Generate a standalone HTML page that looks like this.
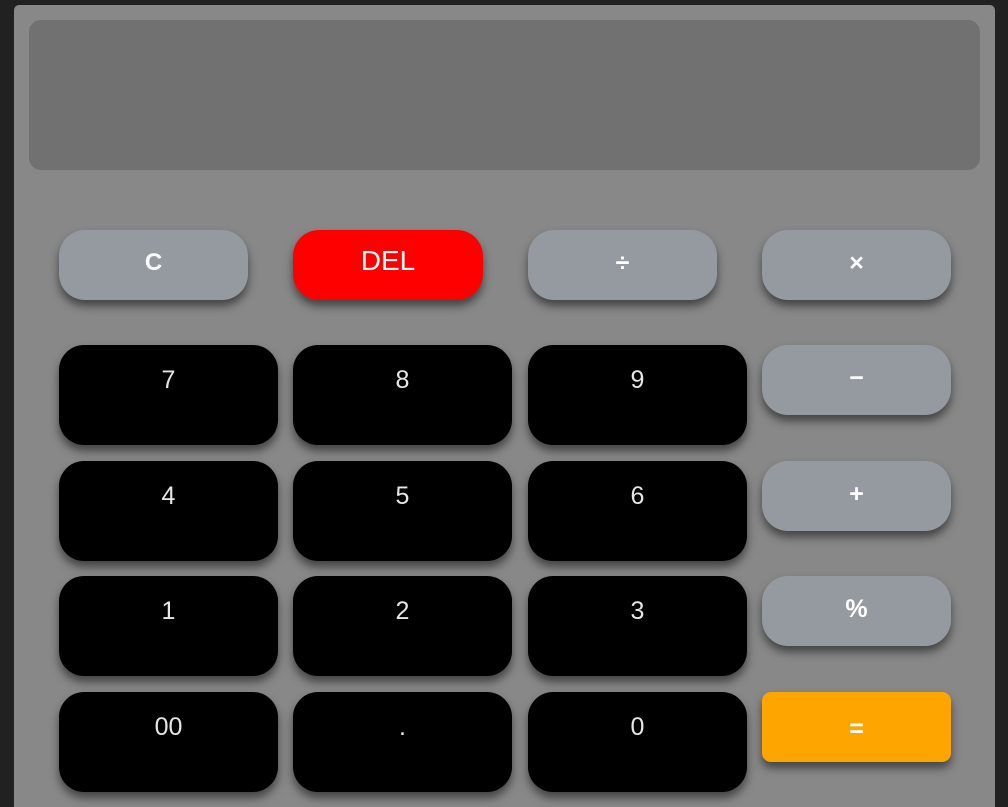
<!DOCTYPE html>
<html><head><style>
html,body{margin:0;height:807px;overflow:hidden;}
body{background:#212121;width:1008px;font-family:"Liberation Sans",sans-serif;position:relative;}
.panel{position:absolute;left:14px;top:5px;width:981px;height:802px;background:#888;border-radius:5px 5px 0 0;}
.disp{position:absolute;left:29px;top:20px;width:951px;height:150px;background:#717171;border-radius:12px;}
.b{position:absolute;box-shadow:0 6px 9px rgba(0,0,0,.5);text-align:center;font-size:25px;}
.g{background:#949aa0;color:#fff;border-radius:26px;height:70px;line-height:66px;width:189px;font-weight:bold;}
.k{background:#000;color:#e6e6e6;border-radius:25px;width:219px;height:100px;line-height:70px;}
.r{background:#f00;color:#fff;}
.o{background:#ffa500;border-radius:9px;}
</style></head><body>
<div class="panel"></div><div class="disp"></div>
<div class="b g" style="left:59px;top:230px;font-size:24px">C</div>
<div class="b g r" style="left:293px;top:230px;width:190px;font-weight:normal;font-size:28px;line-height:62px">DEL</div>
<div class="b g" style="left:528px;top:230px">÷</div>
<div class="b g" style="left:762px;top:230px">×</div>
<div class="b k" style="left:59px;top:345px">7</div>
<div class="b k" style="left:293px;top:345px">8</div>
<div class="b k" style="left:528px;top:345px">9</div>
<div class="b g" style="left:762px;top:345px">−</div>
<div class="b k" style="left:59px;top:461px">4</div>
<div class="b k" style="left:293px;top:461px">5</div>
<div class="b k" style="left:528px;top:461px">6</div>
<div class="b g" style="left:762px;top:461px">+</div>
<div class="b k" style="left:59px;top:576px">1</div>
<div class="b k" style="left:293px;top:576px">2</div>
<div class="b k" style="left:528px;top:576px">3</div>
<div class="b g" style="left:762px;top:576px">%</div>
<div class="b k" style="left:59px;top:692px">00</div>
<div class="b k" style="left:293px;top:692px">.</div>
<div class="b k" style="left:528px;top:692px">0</div>
<div class="b g o" style="left:762px;top:692px;line-height:74px">=</div>
</body></html>
